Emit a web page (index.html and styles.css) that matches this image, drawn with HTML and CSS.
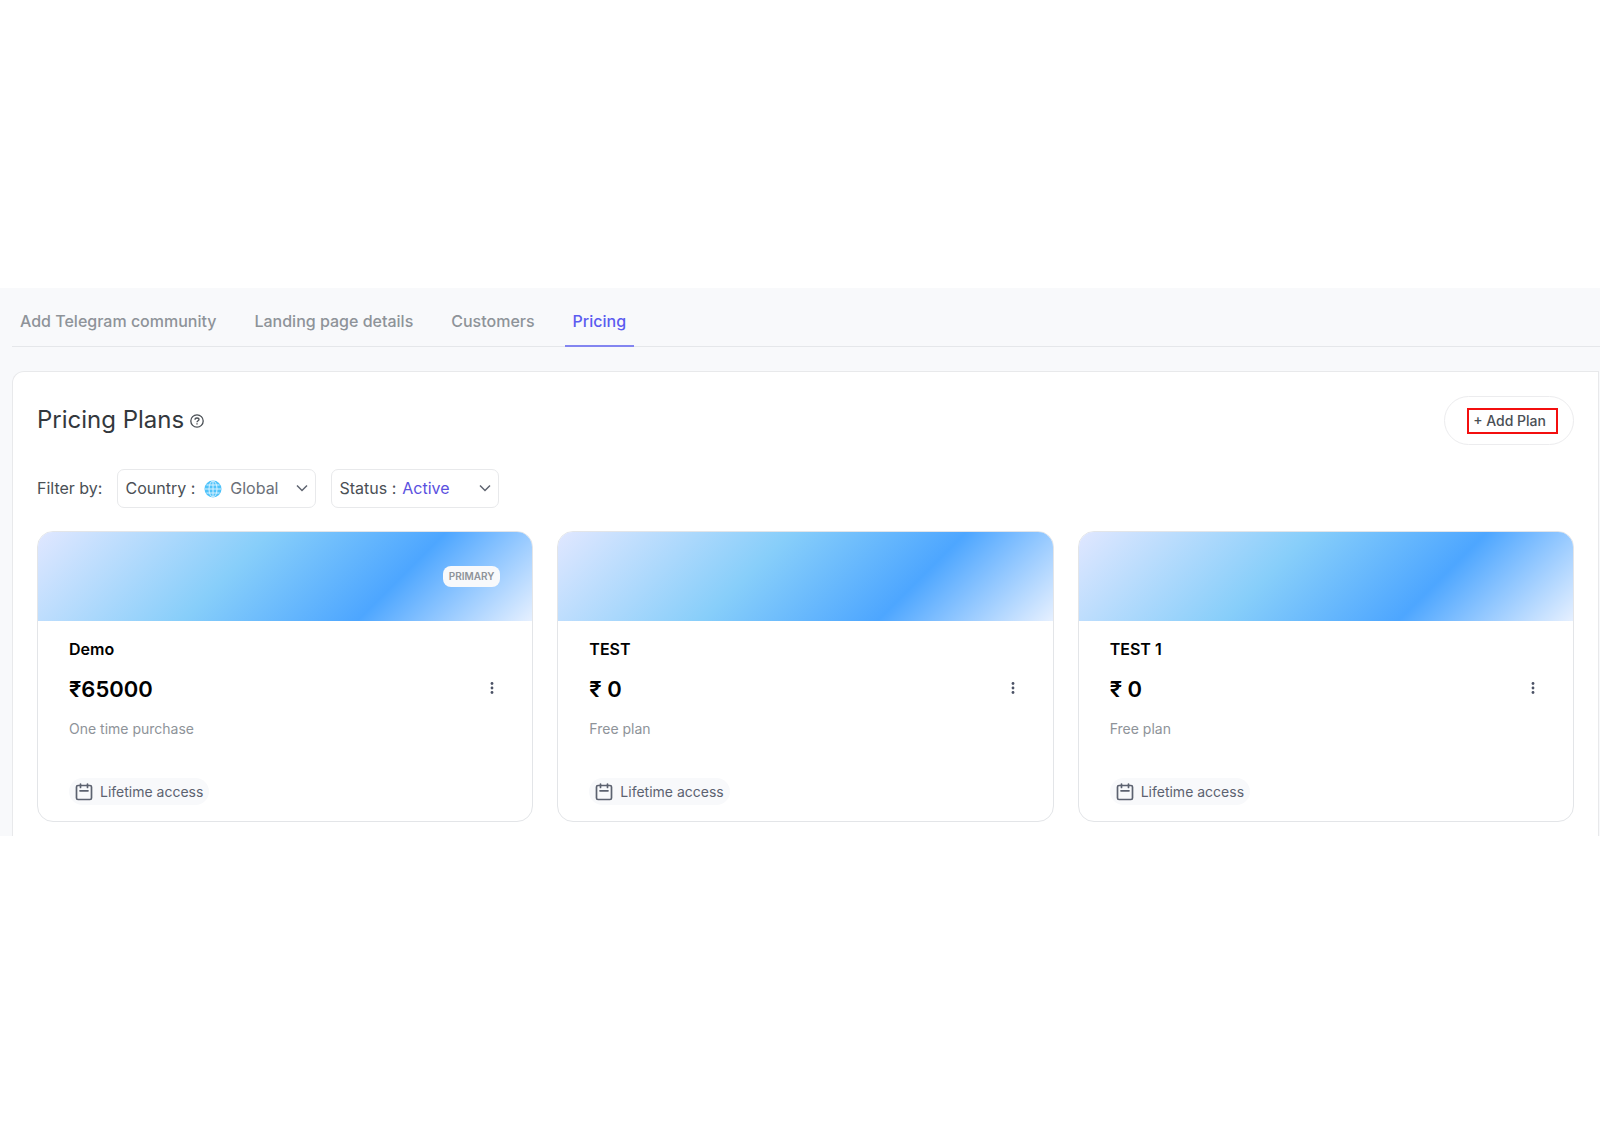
FILE: index.html
```html
<!DOCTYPE html>
<html lang="en">
<head>
  <meta charset="UTF-8">
  <meta name="viewport" content="width=device-width, initial-scale=1.0">
  <title>Pricing Plans</title>
  <link rel="stylesheet" href="styles.css">
</head>
<body>

  <!-- Shared icons -->
  <svg class="icon-defs" aria-hidden="true">
    <symbol id="icon-chevron" viewBox="0 0 12 12">
      <path d="M1 3.5l5 5 5-5" fill="none" stroke="currentColor" stroke-width="1.5"/>
    </symbol>
    <symbol id="icon-dots" viewBox="0 0 4 14">
      <circle cx="2" cy="2.5" r="1.4"/>
      <circle cx="2" cy="7" r="1.4"/>
      <circle cx="2" cy="11.5" r="1.4"/>
    </symbol>
    <symbol id="icon-calendar" viewBox="0 0 18 18">
      <g fill="none" stroke="currentColor" stroke-width="1.7" stroke-linecap="round">
        <rect x="1.5" y="2.5" width="15" height="14" rx="1.5"/>
        <path d="M5.500 1v3.500M12.500 1v3.500M5 7.800h8"/>
      </g>
    </symbol>
  </svg>

  <main class="page">
    <nav class="tabs">
      <a href="#telegram" class="tab">Add Telegram community</a>
      <a href="#landing" class="tab">Landing page details</a>
      <a href="#customers" class="tab">Customers</a>
      <a href="#pricing" class="tab active">Pricing</a>
    </nav>

    <section class="panel">
      <div class="panel-header">
        <h1 class="panel-title">Pricing Plans</h1>
        <button type="button" class="help-button" aria-label="Help">
          <svg width="14" height="14" viewBox="0 0 14 14" fill="none" stroke="currentColor" stroke-width="1.3">
            <circle cx="7" cy="7" r="6.2"/>
            <path d="M5 5.800C5 4.700 5.800 4 7 4s2 .7 2 1.600C9 6.800 7 6.800 7 8.200M7 9.300v1.200"/>
          </svg>
        </button>
        <button type="button" class="add-button"><span class="add-label">+ Add Plan</span></button>
      </div>

      <div class="filters">
        <span class="filter-title">Filter by:</span>
        <div class="filter filter-country">
          <label for="country">Country :</label>
          <svg class="globe" width="18" height="18" viewBox="0 0 18 18">
            <circle cx="9" cy="9" r="8.500" fill="#4fc3fa"/>
            <g fill="none" stroke="#d8f1ff" stroke-width="1">
              <ellipse cx="9" cy="9" rx="4" ry="8"/>
              <path d="M9 1v16M1 9h16M2.500 5h13M2.500 13h13"/>
            </g>
          </svg>
          <select id="country">
            <option>Global</option>
          </select>
          <svg class="chevron" width="12" height="12"><use href="#icon-chevron"/></svg>
        </div>
        <div class="filter filter-status">
          <label for="status">Status :</label>
          <select id="status">
            <option>Active</option>
          </select>
          <svg class="chevron" width="12" height="12"><use href="#icon-chevron"/></svg>
        </div>
      </div>

      <div class="plans">
        <article class="plan">
          <div class="plan-cover"><span class="plan-badge">PRIMARY</span></div>
          <div class="plan-body">
            <h2 class="plan-name">Demo</h2>
            <div class="plan-row">
              <span class="plan-price">₹65000</span>
              <button type="button" class="menu-button" aria-label="Plan options">
                <svg width="4" height="14"><use href="#icon-dots"/></svg>
              </button>
            </div>
            <p class="plan-type">One time purchase</p>
            <span class="plan-access">
              <svg width="18" height="18"><use href="#icon-calendar"/></svg>
              Lifetime access
            </span>
          </div>
        </article>

        <article class="plan">
          <div class="plan-cover"></div>
          <div class="plan-body">
            <h2 class="plan-name">TEST</h2>
            <div class="plan-row">
              <span class="plan-price">₹ 0</span>
              <button type="button" class="menu-button" aria-label="Plan options">
                <svg width="4" height="14"><use href="#icon-dots"/></svg>
              </button>
            </div>
            <p class="plan-type">Free plan</p>
            <span class="plan-access">
              <svg width="18" height="18"><use href="#icon-calendar"/></svg>
              Lifetime access
            </span>
          </div>
        </article>

        <article class="plan">
          <div class="plan-cover"></div>
          <div class="plan-body">
            <h2 class="plan-name">TEST 1</h2>
            <div class="plan-row">
              <span class="plan-price">₹ 0</span>
              <button type="button" class="menu-button" aria-label="Plan options">
                <svg width="4" height="14"><use href="#icon-dots"/></svg>
              </button>
            </div>
            <p class="plan-type">Free plan</p>
            <span class="plan-access">
              <svg width="18" height="18"><use href="#icon-calendar"/></svg>
              Lifetime access
            </span>
          </div>
        </article>
      </div>
    </section>
  </main>

</body>
</html>
```
FILE: styles.css
```css
* {
  margin: 0;
  padding: 0;
  box-sizing: border-box;
}

body {
  font-family: Inter, sans-serif;
  font-size: 16px;
  color: #4a4f55;
  background-color: #fff;
  padding-top: 288px;
}

button,
select {
  font: inherit;
  color: inherit;
  background: none;
  border: none;
  cursor: pointer;
}

svg {
  display: block;
  flex-shrink: 0;
}

.icon-defs {
  display: none;
}

.page {
  background-color: #f8f9fb;
  padding-left: 12px;
  padding-right: 1px;
}

/* Tabs */
.tabs {
  display: flex;
  gap: 22px;
  height: 59px;
  margin-right: -1px;
  border-bottom: 1px solid #e5e7ea;
}

.tab {
  display: flex;
  align-items: center;
  padding: 8px 8px 0;
  margin-bottom: -1px;
  border-bottom: 2px solid transparent;
  color: #8e9399;
  font-weight: 500;
  text-decoration: none;
}

.tab.active {
  color: #5b5cf0;
  border-bottom-color: #8385f0;
}

/* Panel */
.panel {
  margin-top: 24px;
  padding: 24px 24px 14px;
  background-color: #fff;
  border: 1px solid #e8e9eb;
  border-bottom: none;
  border-radius: 12px 0 0 0;
}

.panel-header {
  display: flex;
  align-items: center;
  gap: 6px;
}

.panel-title {
  padding-bottom: 2px;
  font-size: 24px;
  font-weight: 400;
  color: #33383d;
}

.help-button {
  color: #4a4f55;
}

.add-button {
  height: 49px;
  margin-left: auto;
  padding: 0 15px 0 22px;
  border: 1px solid #ececee;
  border-radius: 25px;
  font-size: 14px;
  font-weight: 500;
}

.add-label {
  display: block;
  padding: 2px 10px 2px 4px;
  border: 2px solid #f30f0f;
  line-height: 18px;
}

/* Filters */
.filters {
  display: flex;
  align-items: center;
  gap: 15px;
  margin-top: 24px;
}

.filter-title {
  padding-bottom: 2px;
}

.filter {
  display: flex;
  align-items: center;
  height: 39px;
  padding: 0 7px 2px;
  border: 1px solid #e8e9eb;
  border-radius: 7px;
}

.filter-country {
  width: 199px;
}

.filter-status {
  width: 168px;
}

.filter select {
  flex: 1;
  min-width: 0;
  margin-left: 8px;
  appearance: none;
}

.filter-country select {
  color: #6b7078;
}

.filter-status select {
  margin-left: 6px;
  color: #5a50e0;
}

.globe {
  margin-top: 2px;
  margin-left: 9px;
}

.chevron {
  color: #5f6470;
}

/* Plan cards */
.plans {
  display: grid;
  grid-template-columns: repeat(3, 1fr);
  gap: 24px;
  margin-top: 23px;
}

.plan {
  border: 1px solid #e3e5e8;
  border-radius: 16px;
  overflow: hidden;
}

.plan-cover {
  display: flex;
  justify-content: flex-end;
  align-items: center;
  height: 89px;
  padding: 0 32px;
  background: linear-gradient(135deg, #e0e7ff 0%, #87cefa 40%, #4da6ff 70%, #e6f0ff 100%);
}

.plan-badge {
  padding: 0 6px;
  background-color: #f8f9fb;
  border-radius: 8px;
  color: #8e9399;
  font-size: 10px;
  font-weight: 600;
  line-height: 21px;
}

.plan-body {
  padding: 16px 31px;
}

.plan-name {
  color: #000;
  font-size: 16px;
  font-weight: 600;
  line-height: 24px;
}

.plan-row {
  display: flex;
  justify-content: space-between;
  align-items: center;
  margin-top: 12px;
}

.plan-price {
  color: #000;
  font-size: 22px;
  font-weight: 600;
  line-height: 32px;
}

.menu-button {
  padding: 3px 7px 5px;
  fill: #4c5366;
}

.plan-type {
  margin-top: 14px;
  color: #8e9399;
  font-size: 14px;
  line-height: 20px;
}

.plan-access {
  display: inline-flex;
  align-items: center;
  gap: 7px;
  height: 27px;
  margin-top: 39px;
  padding: 0 6px;
  background-color: #f8f9fb;
  border-radius: 14px;
  color: #5c6270;
  font-size: 14px;
}

@media (max-width: 900px) {
  .plans {
    grid-template-columns: 1fr;
  }

  .tabs {
    overflow-x: auto;
  }

  .filters {
    flex-wrap: wrap;
  }
}
```
